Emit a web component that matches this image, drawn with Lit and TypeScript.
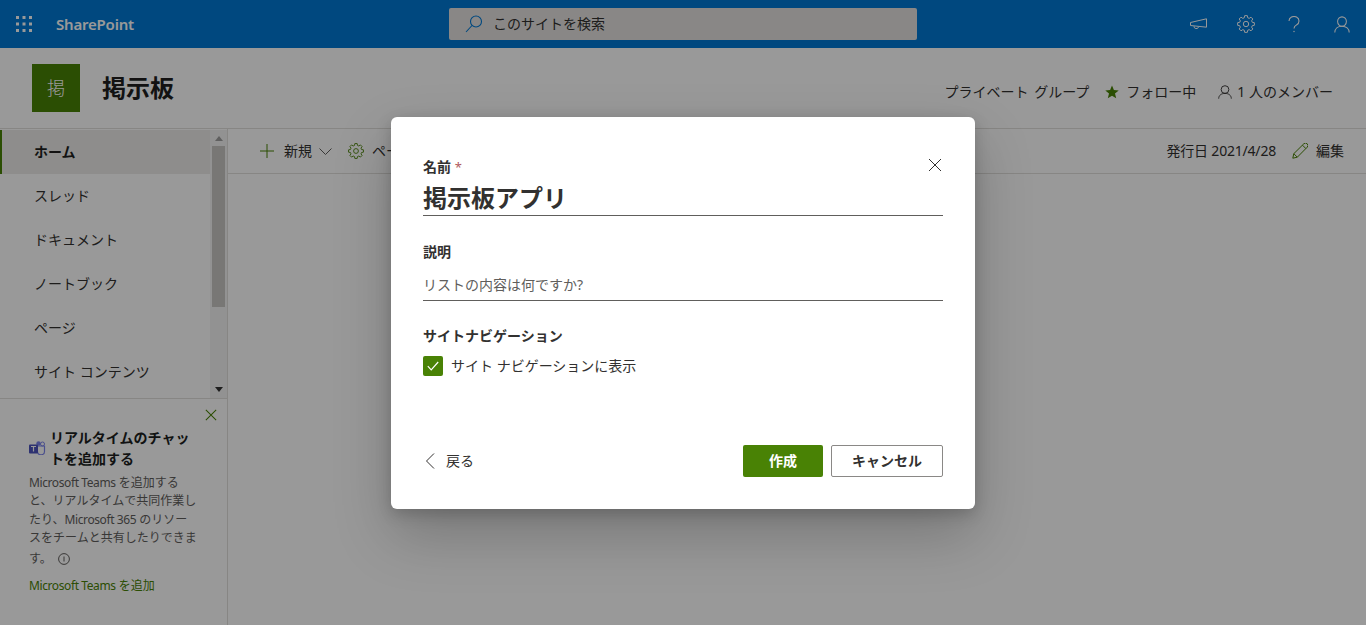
import { LitElement, html, css, svg } from "lit";
import { customElement } from "lit/decorators.js";

function gearPath(cx: number, cy: number, rOut: number, rIn: number, teeth = 8) {
  let d = "";
  const step = (Math.PI * 2) / teeth;
  for (let i = 0; i < teeth; i++) {
    const a = i * step - Math.PI / 2;
    const pts = [
      [a - step * 0.2, rOut],
      [a + step * 0.2, rOut],
      [a + step * 0.34, rIn],
      [a + step * 0.66, rIn],
    ];
    pts.forEach(([t, r], j) => {
      const x = (cx + Math.cos(t) * r).toFixed(2);
      const y = (cy + Math.sin(t) * r).toFixed(2);
      d += `${i === 0 && j === 0 ? "M" : "L"}${x} ${y} `;
    });
  }
  return d + "Z";
}

const gear = (size: number, color: string) => html`<svg width=${size} height=${size} viewBox="0 0 20 20" fill="none" stroke=${color} stroke-width="1.1" stroke-linejoin="round">
  <path d=${gearPath(10, 10, 9.4, 7.2)}></path><circle cx="10" cy="10" r="3"></circle></svg>`;

const person = (w: number, h: number, color: string) => html`<svg width=${w} height=${h} viewBox="0 0 20 20" fill="none" stroke=${color} stroke-width="1.3" preserveAspectRatio="none">
  <circle cx="10" cy="6.500" r="5.500"></circle><path d="M1 19.500c0-4.800 3.800-7.500 9-7.500s9 2.700 9 7.500"></path></svg>`;

const cross = (size: number, color: string, w = 1) => html`<svg width=${size} height=${size} viewBox="0 0 14 14" fill="none" stroke=${color} stroke-width=${w}>
  <path d="M1 1l12 12M13 1L1 13"></path></svg>`;

@customElement("app-root")
export class AppRoot extends LitElement {
  static styles = css`
    :host {
      display: block;
      position: relative;
      width: 1366px;
      height: 625px;
      overflow: hidden;
      background: #fff;
      color: #323130;
      font: 14px/20px "Noto Sans", "Noto Sans CJK JP", sans-serif;
    }
    svg { display: block; flex: none; }
    .suite {
      height: 48px;
      background: #0078d4;
      display: grid;
      grid-template-columns: 1fr 468px 1fr;
      align-items: center;
      color: #fff;
    }
    .suite-left { display: flex; align-items: center; }
    .waffle { width: 48px; height: 48px; display: flex; align-items: center; justify-content: center; }
    .brand { margin-left: 8px; font-size: 15px; font-weight: 600; letter-spacing: -0.2px; }
    .search {
      height: 32px;
      background: #e4e2e0;
      border-radius: 2px;
      display: flex;
      align-items: center;
      padding-left: 16px;
      gap: 10px;
      color: #323130;
    }
    .suite-right { display: flex; justify-content: flex-end; }
    .suite-btn { width: 48px; height: 48px; display: flex; align-items: center; justify-content: center; }
    .site {
      height: 81px;
      box-sizing: border-box;
      border-bottom: 1px solid #e1dfdd;
      display: flex;
      align-items: center;
      padding: 0 33px 0 32px;
    }
    .logo {
      width: 48px;
      height: 48px;
      background: #498205;
      color: #fff;
      font-size: 18px;
      font-weight: 300;
      display: flex;
      align-items: center;
      justify-content: center;
    }
    .site-title { margin-left: 22px; font-size: 24px; font-weight: 700; color: #201f1e; line-height: 32px; }
    .site-meta { margin-left: auto; display: flex; align-items: center; padding-top: 8px; color: #323130; }
    .group { word-spacing: 2px; }
    .follow { display: flex; align-items: center; gap: 7px; margin-left: 16px; }
    .members { display: flex; align-items: center; gap: 5px; margin-left: 22px; }
    .main { display: flex; height: 496px; }
    .side {
      width: 228px;
      box-sizing: border-box;
      border-right: 1px solid #e1dfdd;
      display: flex;
      flex-direction: column;
    }
    .nav-wrap { height: 270px; display: flex; border-bottom: 1px solid #e1dfdd; box-sizing: border-box; padding-top: 1px; }
    .nav { flex: 1; overflow: hidden; }
    .nav-item { height: 44px; display: flex; align-items: center; padding-left: 34px; box-sizing: border-box; }
    .nav-item.active { background: #edebe9; font-weight: 700; color: #201f1e; border-left: 2px solid #498205; padding-left: 32px; }
    .scroll { width: 17px; background: #f3f3f3; display: flex; flex-direction: column; align-items: center; }
    .arrow { height: 16px; display: flex; align-items: center; justify-content: center; }
    .arrow.down { height: 17px; }
    .thumb { width: 13px; height: 161px; background: #c8c6c4; }
    .scroll-gap { flex: 1; }
    .teams { position: relative; flex: 1; padding: 28px 0 0 29px; }
    .teams-close { position: absolute; top: 10px; right: 10px; }
    .teams-head { display: flex; align-items: center; gap: 4px; font-weight: 700; line-height: 21px; color: #201f1e; }
    .teams-body { margin-top: 5px; font-size: 12px; line-height: 18.3px; color: #605e5c; width: 180px; }
    .lat { letter-spacing: -0.4px; }
    .last-line { display: flex; align-items: center; gap: 6px; margin-top: 3px; }
    .teams-link { margin-top: 9px; font-size: 12px; line-height: 18px; color: #498205; }
    .content { flex: 1; }
    .cmd {
      height: 45px;
      box-sizing: border-box;
      border-bottom: 1px solid #e1dfdd;
      display: flex;
      align-items: center;
      padding: 0 22px 0 32px;
    }
    .cmd-item { display: flex; align-items: center; }
    .cmd-new-label { margin-left: 10px; }
    .cmd-chevron { margin-left: 7px; }
    .cmd-page { margin-left: 16px; }
    .cmd-page-label { margin-left: 8px; }
    .cmd-right { margin-left: auto; display: flex; align-items: center; }
    .date { letter-spacing: -0.2px; }
    .pencil { margin-left: 16px; }
    .edit { margin-left: 8px; }
    .overlay {
      position: absolute;
      inset: 0;
      background: rgba(0, 0, 0, 0.4);
      display: flex;
      align-items: center;
      justify-content: center;
    }
    .dialog {
      position: relative;
      width: 584px;
      height: 392px;
      box-sizing: border-box;
      background: #fff;
      border-radius: 6px;
      box-shadow: 0 25.6px 57.6px rgba(0, 0, 0, 0.22), 0 4.8px 14.4px rgba(0, 0, 0, 0.18);
      padding: 40px 32px 32px;
      display: flex;
      flex-direction: column;
    }
    .close { position: absolute; top: 41px; right: 33px; }
    .label { font-weight: 700; color: #323130; }
    .req { color: #b0595d; font-weight: 400; font-size: 13px; }
    .name {
      margin-top: 4px;
      height: 35px;
      box-sizing: border-box;
      border-bottom: 1px solid #605e5c;
      font-size: 24px;
      line-height: 34px;
      font-weight: 700;
      color: #323130;
    }
    .desc-label { margin-top: 26px; }
    .desc {
      margin-top: 8px;
      height: 31px;
      box-sizing: border-box;
      border-bottom: 1px solid #605e5c;
      line-height: 30px;
      color: #605e5c;
    }
    .nav-label { margin-top: 25px; }
    .check { margin-top: 10px; display: flex; align-items: center; gap: 8px; }
    .box { width: 20px; height: 20px; border-radius: 2px; background: #498205; display: flex; align-items: center; justify-content: center; }
    .footer { margin-top: auto; display: flex; align-items: center; }
    .back { display: flex; align-items: center; gap: 10px; padding-left: 2px; }
    .btns { margin-left: auto; display: flex; gap: 8px; }
    .btn {
      height: 32px;
      box-sizing: border-box;
      border-radius: 2px;
      display: flex;
      align-items: center;
      justify-content: center;
      font-weight: 700;
    }
    .primary { width: 80px; background: #498205; color: #fff; }
    .secondary { width: 112px; background: #fff; border: 1px solid #8a8886; color: #323130; }
  `;

  render() {
    const dots = [0, 6.5, 13].flatMap((y) => [0, 6.5, 13].map((x) => svg`<rect x=${x} y=${y} width="3" height="3" fill="#fff"></rect>`));
    return html`
      <div class="suite">
        <div class="suite-left">
          <div class="waffle"><svg width="16" height="16" viewBox="0 0 16 16">${dots}</svg></div>
          <div class="brand">SharePoint</div>
        </div>
        <div class="search">
          <svg width="18" height="18" viewBox="0 0 18 18" fill="none" stroke="#0078d4" stroke-width="1.1"><circle cx="11" cy="6.500" r="5.500"></circle><path d="M7 10.500L1 17"></path></svg>
          <span>このサイトを検索</span>
        </div>
        <div class="suite-right">
          <div class="suite-btn"><svg width="17" height="13" viewBox="0 0 17 13" fill="none" stroke="#fff" stroke-width="1"><path d="M.5 4.500L16.500.8v8.400L.5 7.500zM4 8.200a2.300 2.300 0 0 0 4.500.8"></path></svg></div>
          <div class="suite-btn">${gear(18, "#fff")}</div>
          <div class="suite-btn"><svg width="12" height="17" viewBox="0 0 12 17" fill="none" stroke="#fff" stroke-width="1.100"><path d="M1 5a5 4.500 0 1 1 7.500 3.900C7 9.800 6 10.500 6 12.500"></path><circle cx="6" cy="15.500" r=".7" fill="#fff" stroke="none"></circle></svg></div>
          <div class="suite-btn">${person(16, 17, "#fff")}</div>
        </div>
      </div>
      <div class="site">
        <div class="logo">掲</div>
        <div class="site-title">掲示板</div>
        <div class="site-meta">
          <span class="group">プライベート グループ</span>
          <div class="follow">
            <svg width="14" height="14" viewBox="0 0 14 14"><path fill="#498205" d="M7 .5l1.900 4.500 4.800.4-3.700 3.100 1.200 4.800L7 10.700l-4.200 2.600L4 8.500.3 5.400l4.800-.4z"></path></svg>
            <span>フォロー中</span>
          </div>
          <div class="members">${person(14, 14, "#323130")}<span>1 人のメンバー</span></div>
        </div>
      </div>
      <div class="main">
        <div class="side">
          <div class="nav-wrap">
            <div class="nav">
              <div class="nav-item active">ホーム</div>
              <div class="nav-item">スレッド</div>
              <div class="nav-item">ドキュメント</div>
              <div class="nav-item">ノートブック</div>
              <div class="nav-item">ページ</div>
              <div class="nav-item">サイト コンテンツ</div>
            </div>
            <div class="scroll">
              <div class="arrow"><svg width="8" height="5" viewBox="0 0 8 5"><path fill="#a0a0a0" d="M4 0l4 5H0z"></path></svg></div>
              <div class="thumb"></div>
              <div class="scroll-gap"></div>
              <div class="arrow down"><svg width="8" height="5" viewBox="0 0 8 5"><path fill="#333" d="M0 0h8L4 5z"></path></svg></div>
            </div>
          </div>
          <div class="teams">
            <div class="teams-close">${cross(12, "#498205", 1.2)}</div>
            <div class="teams-head">
              <svg width="17" height="14" viewBox="0 0 17 14">
                <circle cx="13.500" cy="3" r="2" fill="none" stroke="#7b83eb" stroke-width="1"></circle>
                <circle cx="9.500" cy="2.500" r="2.200" fill="#7b83eb"></circle>
                <path d="M7 5h8.500v5a3.500 3.500 0 0 1-7 .5z" fill="none" stroke="#7b83eb" stroke-width="1.200"></path>
                <rect x="0" y="3.500" width="9" height="9" rx="1" fill="#4b53bc"></rect>
                <path d="M2 5.500h5M4.500 5.500v5" stroke="#fff" stroke-width="1.200"></path>
              </svg>
              <span>リアルタイムのチャッ<br />トを追加する</span>
            </div>
            <div class="teams-body">
              <span class="lat">Microsoft Teams</span> を追加する<br />と、リアルタイムで共同作業し<br />たり、<span class="lat">Microsoft 365</span> のリソー<br />スをチームと共有したりできま
              <div class="last-line">
                <span>す。</span>
                <svg width="12" height="12" viewBox="0 0 12 12" fill="none" stroke="#605e5c"><circle cx="6" cy="6" r="5.400"></circle><path d="M6 3.500v5"></path></svg>
              </div>
            </div>
            <div class="teams-link"><span class="lat">Microsoft Teams</span> を追加</div>
          </div>
        </div>
        <div class="content">
          <div class="cmd">
            <div class="cmd-item">
              <svg width="14" height="14" viewBox="0 0 14 14" stroke="#498205" stroke-width="1"><path d="M7 0v14M0 7h14"></path></svg>
              <span class="cmd-new-label">新規</span>
              <svg class="cmd-chevron" width="13" height="7" viewBox="0 0 13 7" fill="none" stroke="#605e5c"><path d="M.5.500l6 6 6-6"></path></svg>
            </div>
            <div class="cmd-item cmd-page">
              ${gear(16, "#498205")}
              <span class="cmd-page-label">ページ</span>
            </div>
            <div class="cmd-right">
              <span class="date">発行日 2021/4/28</span>
              <svg class="pencil" width="16" height="16" viewBox="0 0 16 16" fill="none" stroke="#498205"><path d="M.8 15.200l1-4.500L11.800.8a1.800 1.800 0 0 1 3.400 3.400L5.300 14.200zM1.800 10.700l3.500 3.500M10.500 2.200l3.300 3.300"></path></svg>
              <span class="edit">編集</span>
            </div>
          </div>
        </div>
      </div>
      <div class="overlay">
        <div class="dialog">
          <div class="close">${cross(14, "#323130")}</div>
          <div class="label">名前 <span class="req">*</span></div>
          <div class="name">掲示板アプリ</div>
          <div class="label desc-label">説明</div>
          <div class="desc">リストの内容は何ですか?</div>
          <div class="label nav-label">サイトナビゲーション</div>
          <div class="check">
            <div class="box"><svg width="12" height="10" viewBox="0 0 12 10" fill="none" stroke="#fff" stroke-width="1.200"><path d="M.8 5.200L4.200 8.800 11.200 1"></path></svg></div>
            <span>サイト ナビゲーションに表示</span>
          </div>
          <div class="footer">
            <div class="back">
              <svg width="11" height="16" viewBox="0 0 11 16" fill="none" stroke="#323130"><path d="M9 .5L1.500 8 9 15.500"></path></svg>
              <span>戻る</span>
            </div>
            <div class="btns">
              <div class="btn primary">作成</div>
              <div class="btn secondary">キャンセル</div>
            </div>
          </div>
        </div>
      </div>
    `;
  }
}
